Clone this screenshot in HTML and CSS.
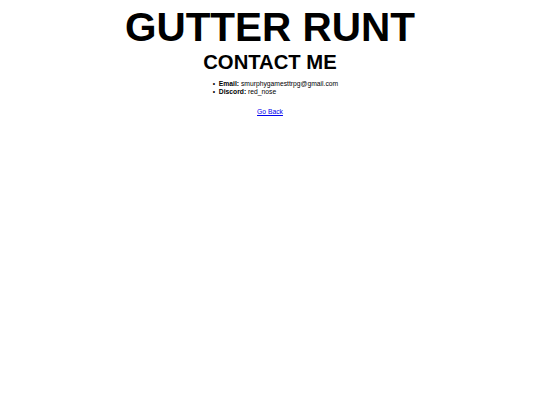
FILE: index.html
```html
<!DOCTYPE html>
<html lang="en">
<head>
    <meta charset="UTF-8">
    <meta name="viewport" content="width=device-width, initial-scale=1.0">
    <title>Gutter Runt - Contact</title>
    <link rel="stylesheet" href="styles.css">
</head>
<body>

<div class="page">
    <h1 class="site-title">GUTTER RUNT</h1>
    <h2 class="page-title">CONTACT ME</h2>

    <div class="contact">
        <ul class="contact-list">
            <li><strong>Email:</strong> smurphygamesttrpg@gmail.com</li>
            <li><strong>Discord:</strong> red_nose</li>
        </ul>
    </div>

    <p class="back"><a href="index.html">Go Back</a></p>
</div>

</body>
</html>
```

FILE: styles.css
```css
/* General styles */
body {
    margin: 3.5px 5.4px;
    font-family: "Liberation Sans", Arial, sans-serif;
    font-size: 6.75px;
    color: #000;
    background-color: #fff;
}
.page {
    text-align: center;
}
.site-title {
    margin: 0;
    font-size: 40.5px;
    font-weight: bold;
}
.page-title {
    margin: 0;
    font-size: 20.25px;
    font-weight: bold;
}
/* Contact details */
.contact {
    line-height: 0;
}
.contact-list {
    display: inline-block;
    margin: 6.5px 0 5.5px;
    padding-left: 17px;
    list-style: none;
    text-align: left;
    line-height: 8px;
}
.contact-list li::before {
    content: "\2022";
    display: inline-block;
    width: 6px;
    margin-left: -6px;
}
.back {
    margin: 6.75px 0;
}
.back a {
    color: #0000ee;
}
```
